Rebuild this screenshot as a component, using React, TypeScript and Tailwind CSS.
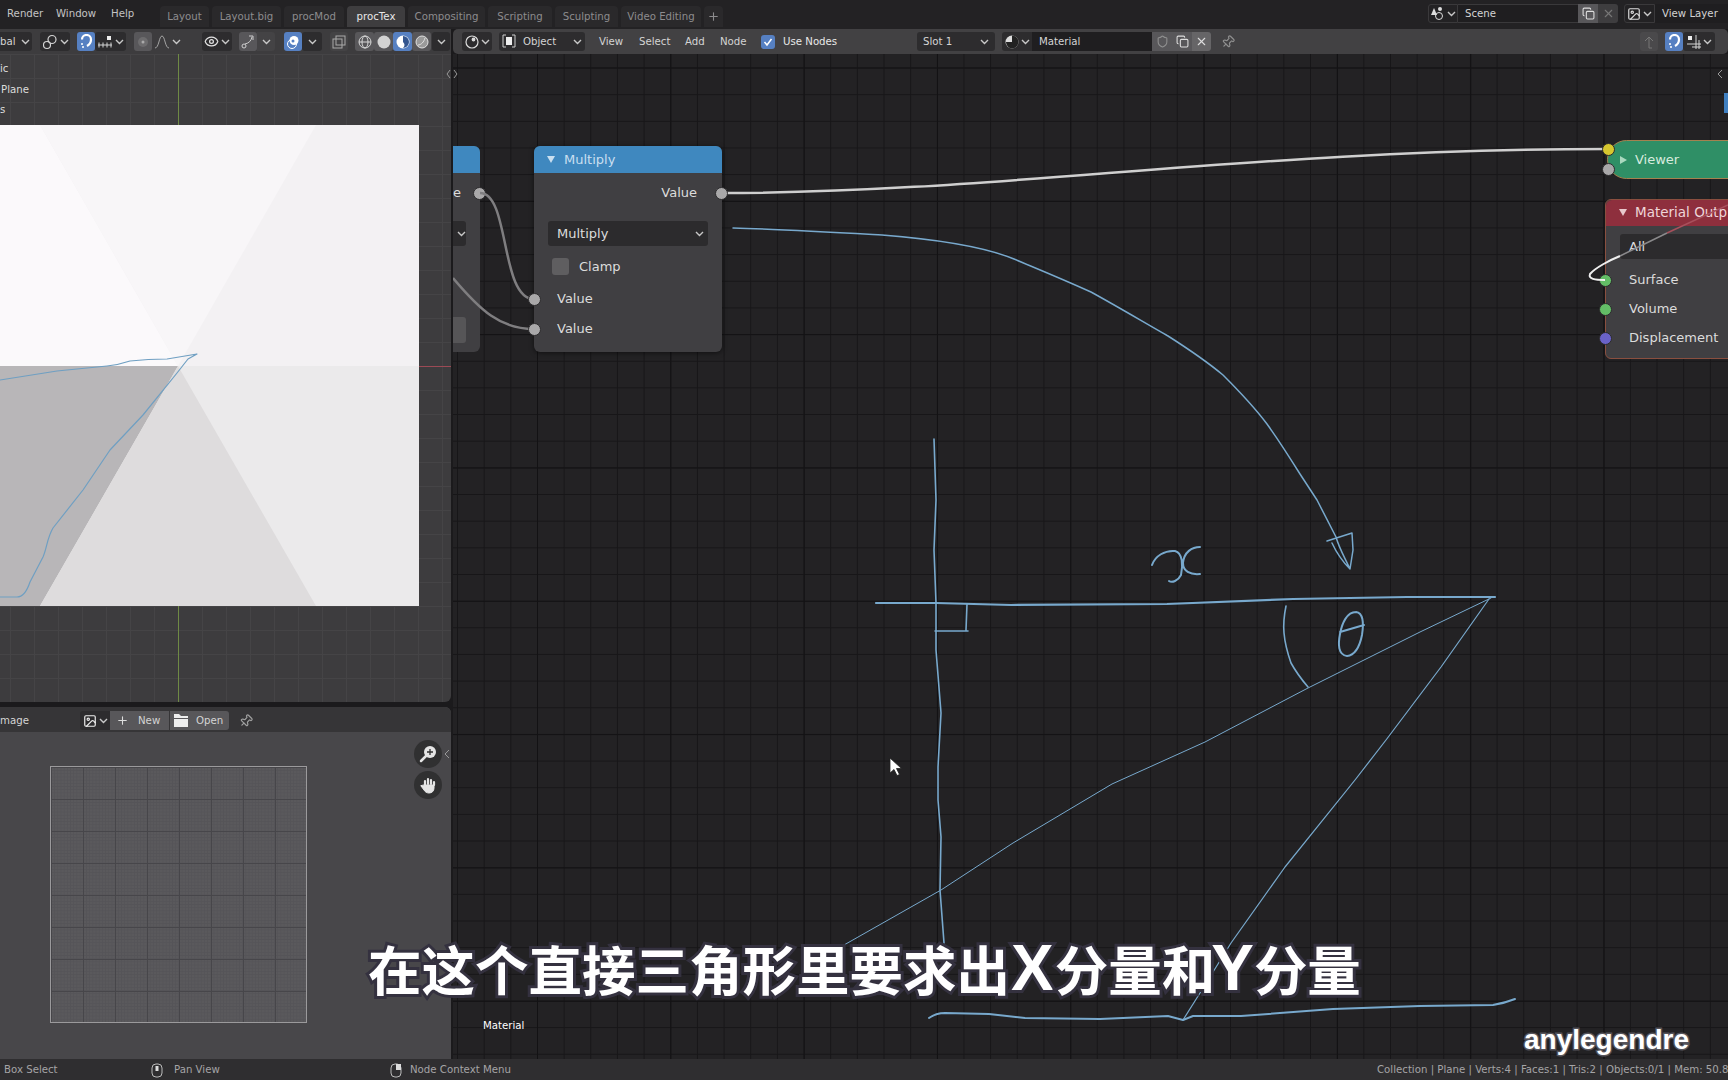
import type { ReactNode } from 'react';
import { Copy, Eye, Image as ImageIcon, Pin, Plus, Shield, X } from 'lucide-react';

const tabs = [
	{ name: 'Layout', w: 'w-[49px]' },
	{ name: 'Layout.big', w: 'w-[69px]' },
	{ name: 'procMod', w: 'w-[60px]' },
	{ name: 'procTex', w: 'w-[58px]', active: true },
	{ name: 'Compositing', w: 'w-[77px]' },
	{ name: 'Scripting', w: 'w-[64px]' },
	{ name: 'Sculpting', w: 'w-[63px]' },
	{ name: 'Video Editing', w: 'w-[80px]' },
];

const Chevron = ({ className = '' }: { className?: string }) => (
	<svg width="9" height="6" viewBox="0 0 9 6" className={className}>
		<path d="M1 1l3.5 3.5L8 1" fill="none" stroke="#c8c8c8" strokeWidth="1.4" />
	</svg>
);

const Magnet = () => (
	<svg width="15" height="15" viewBox="0 0 15 15" fill="none" stroke="#fff" strokeWidth="2.2">
		<path d="M3 5.5a4.5 4.5 0 0 1 9 0c0 3-1.500 5-4 6.500" />
		<path d="M2 10h2.500M3 13h2" strokeWidth="1.300" strokeDasharray="2 1" />
	</svg>
);

const LinkIcon = () => (
	<svg width="16" height="16" viewBox="0 0 16 16" fill="none" stroke="#d4d4d4" strokeWidth="1.200">
		<circle cx="10" cy="5.500" r="4" />
		<circle cx="5" cy="11" r="3.500" />
	</svg>
);

const SnapIcon = () => (
	<svg width="16" height="14" viewBox="0 0 16 14" fill="none" stroke="#d4d4d4" strokeWidth="1">
		<rect x="10" y="1" width="4" height="4" fill="#eee" stroke="none" />
		<path d="M1 10h14M2 7.500v5M6 7.500v5M10 7.500v5M14 7.500v5" />
	</svg>
);

const DarkBtn = ({ w, children }: { w: string; children: ReactNode }) => (
	<div className={`${w} h-[19px] flex items-center justify-center gap-[2px] bg-[#2d2c2e] rounded-[3px]`}>{children}</div>
);

const GreyBtn = ({ w, children }: { w: string; children: ReactNode }) => (
	<div className={`${w} h-[19px] flex items-center justify-center bg-[#58575a] rounded-[3px]`}>{children}</div>
);

const BlueBtn = ({ w, children }: { w: string; children: ReactNode }) => (
	<div className={`${w} h-[19px] flex items-center justify-center bg-[#5680c2] rounded-[3px]`}>{children}</div>
);

const Socket = ({ className }: { className: string }) => (
	<span className={`absolute w-[13px] h-[13px] rounded-full border border-[#2c2b2d] ${className}`} />
);

const ViewportHeader = () => (
	<div className="h-[25px] shrink-0 flex items-center bg-[#3d3c3e] text-[10.2px] text-[#d4d4d4]">
		<div className="w-[32px] h-[19px] flex items-center justify-between pr-[2px] bg-[#2d2c2e] rounded-r-[3px]">
			<span>bal</span>
			<Chevron />
		</div>
		<div className="ml-[8px]">
			<DarkBtn w="w-[30px]"><LinkIcon /><Chevron /></DarkBtn>
		</div>
		<div className="ml-[7px] flex">
			<BlueBtn w="w-[18px]"><Magnet /></BlueBtn>
			<DarkBtn w="w-[31px]"><SnapIcon /><Chevron /></DarkBtn>
		</div>
		<div className="ml-[8px] flex">
			<GreyBtn w="w-[18px]">
				<svg width="12" height="12" viewBox="0 0 12 12"><circle cx="6" cy="6" r="5" fill="#6d6c6e" /><circle cx="6" cy="6" r="1.500" fill="#aaa" /></svg>
			</GreyBtn>
			<div className="w-[31px] h-[19px] flex items-center justify-center gap-[2px]">
				<svg width="16" height="14" viewBox="0 0 16 14" fill="none" stroke="#a5a5a5" strokeWidth="1"><path d="M1 13c4 0 4-12 7-12s3 12 7 12" /></svg>
				<Chevron />
			</div>
		</div>
		<div className="ml-[19px]">
			<DarkBtn w="w-[30px]"><Eye size={15} color="#e2e2e2" /><Chevron /></DarkBtn>
		</div>
		<div className="ml-[7px] flex">
			<GreyBtn w="w-[18px]">
				<svg width="14" height="14" viewBox="0 0 14 14" fill="none" stroke="#cfcfcf" strokeWidth="1"><circle cx="3" cy="11" r="2" /><path d="M4 9c4-1 6-3 7-7M8 1h4v4" /></svg>
			</GreyBtn>
			<div className="w-[18px] h-[19px] flex items-center justify-center bg-[#444345] rounded-r-[3px]"><Chevron /></div>
		</div>
		<div className="ml-[9px] flex">
			<BlueBtn w="w-[18px]">
				<svg width="14" height="14" viewBox="0 0 14 14"><circle cx="6" cy="9" r="4.500" fill="none" stroke="#fff" /><circle cx="8" cy="5.500" r="4.500" fill="#fff" /><circle cx="7" cy="6" r="1.500" fill="#5680c2" /></svg>
			</BlueBtn>
			<DarkBtn w="w-[20px]"><Chevron /></DarkBtn>
		</div>
		<div className="ml-[8px]">
			<div className="w-[18px] h-[19px] flex items-center justify-center bg-[#444345] rounded-[3px]">
				<svg width="14" height="14" viewBox="0 0 14 14" fill="none" stroke="#aaa"><rect x="4" y="1" width="9" height="9" /><rect x="1" y="4" width="9" height="9" /></svg>
			</div>
		</div>
		<div className="ml-[7px] flex">
			<GreyBtn w="w-[19px]">
				<svg width="14" height="14" viewBox="0 0 14 14" fill="none" stroke="#d8d8d8"><circle cx="7" cy="7" r="6" /><ellipse cx="7" cy="7" rx="3" ry="6" /><path d="M1 7h12" /></svg>
			</GreyBtn>
			<GreyBtn w="w-[19px]">
				<svg width="14" height="14" viewBox="0 0 14 14"><circle cx="7" cy="7" r="6.500" fill="#d2d2d2" /></svg>
			</GreyBtn>
			<BlueBtn w="w-[19px]">
				<svg width="14" height="14" viewBox="0 0 14 14"><circle cx="7" cy="7" r="6.500" fill="#fff" /><path d="M7 1a6 6 0 0 1 6 6 6 6 0 0 1-6 6c2-2 2-4 0-6z" fill="#34568f" /></svg>
			</BlueBtn>
			<GreyBtn w="w-[19px]">
				<svg width="14" height="14" viewBox="0 0 14 14" fill="#9a9a9a" stroke="#e0e0e0"><circle cx="7" cy="7" r="6" /><path d="M3 10c3 0 6-3 7-7" fill="none" /></svg>
			</GreyBtn>
		</div>
		<div className="ml-[1px] w-[18px] h-[19px] flex items-center justify-center bg-[#2d2c2e] rounded-[3px]"><Chevron /></div>
	</div>
);

const NodeHeader = () => (
	<div className="relative h-[25px] shrink-0 flex items-center pl-[9px] bg-[#424143] rounded-[5px] text-[10.2px] text-[#d4d4d4]">
		<DarkBtn w="w-[30px]">
			<svg width="14" height="14" viewBox="0 0 14 14" fill="none" stroke="#ddd" strokeWidth="1.200"><circle cx="7" cy="7" r="6" /><circle cx="8.500" cy="4.500" r="1.300" fill="#ddd" /></svg>
			<Chevron />
		</DarkBtn>
		<div className="ml-[7px] w-[86px] h-[19px] flex items-center justify-between px-[3px] bg-[#2d2c2e] rounded-[3px]">
			<span className="flex items-center gap-[7px]">
				<svg width="14" height="14" viewBox="0 0 14 14" fill="none" stroke="#ccc"><path d="M4 1H1v12h3M10 1h3v12h-3" /><rect x="4" y="3" width="6" height="8" fill="#eee" stroke="none" /></svg>
				Object
			</span>
			<Chevron />
		</div>
		<span className="ml-[14px] w-[26px]">View</span>
		<span className="ml-[14px] w-[32px]">Select</span>
		<span className="ml-[14px] w-[20px]">Add</span>
		<span className="ml-[15px] w-[27px]">Node</span>
		<div className="ml-[14px] w-[14px] h-[14px] flex items-center justify-center bg-[#5680c2] rounded-[3px]">
			<svg width="10" height="10" viewBox="0 0 10 10" fill="none" stroke="#fff" strokeWidth="1.500"><path d="M1.500 5l2.500 3 4.500-6" /></svg>
		</div>
		<span className="ml-[8px] w-[56px] text-[#e8e8e8] whitespace-nowrap">Use Nodes</span>
		<div className="ml-[78px] w-[78px] h-[19px] flex items-center justify-between px-[6px] bg-[#2d2c2e] rounded-[3px]">
			<span>Slot 1</span>
			<Chevron />
		</div>
		<div className="ml-[7px] flex h-[19px]">
			<div className="w-[30px] flex items-center justify-center gap-[2px] bg-[#2d2c2e] rounded-l-[3px]">
				<svg width="14" height="14" viewBox="0 0 14 14"><circle cx="7" cy="7" r="6.500" fill="#ddd" /><path d="M7 .5a6.500 6.500 0 0 1 0 13z M1 7h6v6.500a6.500 6.500 0 0 1-6-6.500z" fill="#222" /></svg>
				<Chevron />
			</div>
			<div className="w-[120px] flex items-center px-[7px] bg-[#1f1e20]">Material</div>
			<div className="w-[20px] flex items-center justify-center bg-[#58575a]"><Shield size={13} color="#8f8f8f" /></div>
			<div className="w-[20px] flex items-center justify-center bg-[#58575a]"><Copy size={13} color="#ddd" /></div>
			<div className="w-[19px] flex items-center justify-center bg-[#666567] rounded-r-[3px]"><X size={13} color="#ddd" /></div>
		</div>
		<Pin size={14} color="#8f8f8f" className="ml-[10px] rotate-45" />
		<div className="ml-auto mr-[13px] flex items-center">
			<div className="w-[18px] h-[19px] flex items-center justify-center bg-[#4a494b] rounded-[3px]">
				<svg width="12" height="14" viewBox="0 0 12 14" fill="none" stroke="#777"><path d="M6 13V2M2 6l4-4 4 4M9 13H6" /></svg>
			</div>
			<div className="ml-[7px]"><BlueBtn w="w-[18px]"><Magnet /></BlueBtn></div>
			<DarkBtn w="w-[32px]">
				<svg width="14" height="14" viewBox="0 0 14 14" fill="none" stroke="#d4d4d4"><rect x="1" y="1" width="4" height="4" fill="#eee" stroke="none" /><path d="M0 9h14M9 0v14M5 12h9M12 5v9" /></svg>
				<Chevron />
			</DarkBtn>
		</div>
	</div>
);

const MultiplyNode = () => (
	<div className="absolute left-[81px] top-[92px] w-[188px] h-[206px] flex flex-col bg-[#403f42] rounded-[6px] shadow-[0_1px_5px_#0008] text-[13px] text-[#dcdcdc]">
		<div className="h-[27px] flex items-center pl-[13px] gap-[9px] bg-[#3f88bf] rounded-t-[6px] text-[#c9dff0]">
			<svg width="8" height="7" viewBox="0 0 8 7"><path d="M0 0h8L4 7z" fill="#c9dff0" /></svg>
			Multiply
		</div>
		<div className="h-[40px] flex items-center justify-end pr-[25px]">Value</div>
		<div className="mx-[14px] mt-[8px] h-[25px] flex items-center justify-between pl-[9px] pr-[4px] bg-[#2c2b2d] rounded-[3px]">
			Multiply
			<Chevron />
		</div>
		<div className="mt-[12px] ml-[18px] h-[17px] flex items-center gap-[10px]">
			<span className="w-[17px] h-[17px] bg-[#5f5e60] rounded-[3px]" />
			Clamp
		</div>
		<div className="mt-[9px] ml-[23px] h-[30px] flex items-center">Value</div>
		<div className="ml-[23px] h-[30px] flex items-center">Value</div>
		<Socket className="left-[-6px] top-[147px] bg-[#a9a8a9]" />
		<Socket className="left-[-6px] top-[177px] bg-[#a9a8a9]" />
		<Socket className="right-[-6px] top-[41px] bg-[#a9a8a9]" />
	</div>
);

const LeftNode = () => (
	<div className="absolute left-0 top-[92px] w-[27px] h-[206px] flex flex-col bg-[#403f42] rounded-r-[6px] text-[13px] text-[#dcdcdc]">
		<div className="h-[27px] bg-[#3f88bf] rounded-tr-[6px]" />
		<div className="h-[40px] flex items-center">e</div>
		<div className="mt-[8px] w-[13px] h-[25px] flex items-center justify-end bg-[#2c2b2d] rounded-r-[3px]"><Chevron /></div>
		<div className="mt-[71px] w-[13px] h-[26px] bg-[#565557] rounded-r-[3px]" />
		<Socket className="right-[-6px] top-[41px] bg-[#a9a8a9]" />
	</div>
);

const ViewerNode = () => (
	<div className="absolute left-[1154px] top-[86px] w-[140px] h-[39px] flex items-center pl-[12px] gap-[8px] bg-[#2f8f66] border border-[#a5814f] rounded-l-[20px] text-[13px] text-[#d7ebdf]">
		<svg width="7" height="8" viewBox="0 0 7 8"><path d="M0 0l7 4-7 4z" fill="#a9d9bf" /></svg>
		Viewer
		<Socket className="left-[-6px] top-[2px] bg-[#d6c72f]" />
		<Socket className="left-[-6px] top-[22px] bg-[#a9a8a9]" />
	</div>
);

const MaterialNode = () => (
	<div className="absolute left-[1152px] top-[145px] w-[200px] h-[160px] flex flex-col bg-[#403f42] border border-[#8a4f3f] rounded-[6px] text-[13px] text-[#dcdcdc]">
		<div className="h-[26px] pb-[2px] flex items-center pl-[13px] gap-[8px] bg-[#8e2f3d] rounded-t-[6px] text-[13.5px] text-[#eed5d8]">
			<svg width="8" height="7" viewBox="0 0 8 7"><path d="M0 0h8L4 7z" fill="#e8c8cc" /></svg>
			Material Outp
		</div>
		<div className="ml-[14px] mt-[8px] h-[25px] flex items-center pl-[9px] bg-[#2c2b2d] rounded-l-[3px]">All</div>
		<div className="ml-[23px] mt-[7px] h-[28px] flex items-center">Surface</div>
		<div className="ml-[23px] h-[30px] flex items-center">Volume</div>
		<div className="ml-[23px] h-[28px] flex items-center">Displacement</div>
		<Socket className="left-[-7px] top-[74px] bg-[#63bd66]" />
		<Socket className="left-[-7px] top-[103px] bg-[#63bd66]" />
		<Socket className="left-[-7px] top-[132px] bg-[#6a62c8]" />
	</div>
);

const Strokes = () => (
	<svg width="1728" height="1080" viewBox="0 0 1728 1080" className="absolute left-0 top-0 pointer-events-none" fill="none" stroke="#78a9cd" strokeLinecap="round" strokeLinejoin="round">
		<path strokeWidth="1.200" stroke="#6f9fc2" d="M0 380L57 371L107 366Q118 365 130 361Q148 359 167 359L197 354L188 359L177 373L143 415L110 450L83 490L53 528C47 538 47 548 43 557L30 582Q25 597 17 597H0" />
		<path strokeWidth="1.500" d="M733 228C780 229 830 232 882 235C920 238 980 245 1014 259C1045 272 1060 278 1091 292C1120 308 1140 320 1168 336C1190 350 1205 360 1223 375C1240 392 1255 408 1267 424C1280 442 1290 458 1300 474L1317 500L1336 537C1339 548 1345 558 1350 569C1347 566 1338 556 1332 543M1327 541L1352 533L1353 550L1350 569" />
		<path strokeWidth="2" d="M1152 565C1155 556 1165 550 1175 551C1183 553 1183 566 1181 575C1178 581 1172 583 1169 581M1200 547C1192 547 1184 552 1183 563C1183 571 1190 575 1200 574" />
		<path strokeWidth="2.200" d="M876 603L936 603L1011 605L1167 604L1293 599L1407 597L1495 597" />
		<path strokeWidth="1.600" d="M934 439L936 500L934 550L936 603L936 650L941 713L938 767L938 800L941 837L940 890L944 943" />
		<path strokeWidth="1.600" d="M967 604L966 630M935 631L968 631" />
		<path strokeWidth="1.600" d="M1286 606C1282 625 1283 640 1291 663C1296 672 1302 680 1308 687" />
		<path strokeWidth="2" d="M1356 612C1347 612 1342 623 1340 634C1338 644 1338 655 1347 656C1356 655 1360 645 1362 635C1364 622 1363 613 1356 612M1340 632L1364 625" />
		<path strokeWidth="1" d="M1491 598L1420 632L1308 688L1205 742L1112 784L1013 843L941 890L844 945" />
		<path strokeWidth="1.200" d="M1489 599L1441 667L1386 740L1355 780L1285 867L1231 943L1200 993L1183 1020" />
		<path strokeWidth="2" d="M929 1018Q936 1013 945 1013L989 1014L1025 1018L1100 1019L1168 1016L1183 1020L1193 1016L1241 1016L1333 1009L1420 1006L1493 1005Q1505 1003 1515 999" />
	</svg>
);

const App = () => (
	<div className="relative w-[1728px] h-[1080px] flex flex-col overflow-hidden bg-[#1b1a1c] font-['DejaVu_Sans',sans-serif]">
		<div className="h-[29px] shrink-0 flex items-start bg-[#232224] text-[10.2px] text-[#c4c4c4]">
			<div className="w-[160px] shrink-0 flex h-[27px] items-center">
				<span className="ml-[7px] w-[49px]">Render</span>
				<span className="w-[55px]">Window</span>
				<span>Help</span>
			</div>
			<div className="mt-[6px] flex gap-[3px]">
				{tabs.map((tab) => (
					<div
						key={tab.name}
						className={`${tab.w} h-[21px] flex items-center justify-center rounded-t-[4px] ${tab.active ? 'bg-[#3e3d3f] text-[#e8e8e8]' : 'bg-[#2a292b] text-[#8d8c8e]'}`}
					>
						{tab.name}
					</div>
				))}
				<div className="w-[19px] h-[21px] flex items-center justify-center bg-[#2a292b] rounded-t-[4px]">
					<Plus size={13} color="#8d8c8e" />
				</div>
			</div>
			<div className="ml-auto mt-[4px] flex h-[19px]">
				<div className="w-[30px] flex items-center justify-center gap-[2px] border border-[#3a393b] rounded-l-[3px]">
					<svg width="15" height="15" viewBox="0 0 15 15"><path d="M4 2l3 7H1z" fill="#ddd" /><circle cx="10" cy="3" r="2" fill="#ddd" /><circle cx="9" cy="10" r="3.500" fill="none" stroke="#ddd" /></svg>
					<Chevron />
				</div>
				<div className="w-[120px] flex items-center px-[7px] bg-[#1f1e20] border-y border-[#3a393b] text-[#d4d4d4]">Scene</div>
				<div className="w-[20px] flex items-center justify-center bg-[#58575a]"><Copy size={13} color="#ddd" /></div>
				<div className="w-[20px] flex items-center justify-center bg-[#3e3d3f] rounded-r-[3px]"><X size={13} color="#777" /></div>
				<div className="ml-[6px] w-[31px] flex items-center justify-center gap-[2px] border border-[#3a393b] rounded-l-[3px]">
					<ImageIcon size={14} color="#ddd" />
					<Chevron />
				</div>
				<div className="w-[73px] flex items-center pl-[7px] bg-[#1f1e20] text-[#d4d4d4] whitespace-nowrap">View Layer</div>
			</div>
		</div>

		<div className="flex-1 min-h-0 flex">
			<div className="w-[451px] shrink-0 flex flex-col gap-[5px]">
				<div className="relative h-[673px] shrink-0 flex flex-col overflow-hidden bg-[#3d3c3e] rounded-br-[6px]">
					<ViewportHeader />
					<div className="relative flex-1 bg-[linear-gradient(#454446_1px,transparent_1px),linear-gradient(90deg,#454446_1px,transparent_1px)] bg-[size:24px_24px] bg-[position:10px_0]">
						<div className="absolute left-[178px] top-0 bottom-0 w-[1px] bg-[#6f8a45]" />
						<div className="absolute left-[419px] right-0 top-[312px] h-[1px] bg-[#9c4a55]" />
						<svg width="419" height="481" viewBox="0 125 419 481" className="absolute left-0 top-[71px]">
							<rect x="0" y="125" width="419" height="241" fill="#f3f1f3" />
							<path d="M0 125H40L178 366H0z" fill="#fbf9fb" />
							<path d="M40 125H316L178 366z" fill="#f8f6f8" />
							<rect x="0" y="366" width="419" height="240" fill="#ebeaeb" />
							<path d="M0 366H178L40 606H0z" fill="#b8b6b8" />
							<path d="M178 366L40 606H316z" fill="#dedcdd" />
						</svg>
						<div className="absolute left-0 top-[5px] flex flex-col text-[10.2px] leading-[20.500px] text-[#dcdcdc]">
							<span>ic</span>
							<span className="pl-[1px]">Plane</span>
							<span>s</span>
						</div>
					</div>
				</div>

				<div className="flex-1 min-h-0 flex flex-col overflow-hidden rounded-tr-[6px] bg-[#48474a]">
					<div className="h-[25px] pt-[2px] shrink-0 flex items-center bg-[#363537] text-[10.2px] text-[#d4d4d4]">
						<span className="w-[80px]">mage</span>
						<div className="w-[30px] h-[19px] flex items-center justify-center gap-[2px] bg-[#2d2c2e] rounded-l-[3px]">
							<ImageIcon size={14} color="#eee" />
							<Chevron />
						</div>
						<div className="w-[60px] h-[19px] flex items-center gap-[9px] pl-[6px] bg-[#58575a] border-r border-[#363537]">
							<Plus size={13} color="#ddd" />
							New
						</div>
						<div className="w-[59px] h-[19px] flex items-center gap-[8px] pl-[4px] bg-[#58575a] rounded-r-[3px]">
							<svg width="14" height="13" viewBox="0 0 14 13"><path d="M0 0h5l2 2h7v2H0zM0 5h14v8H0z" fill="#eee" /></svg>
							Open
						</div>
						<Pin size={14} color="#a0a0a0" className="ml-[10px] rotate-45" />
					</div>
					<div className="relative flex-1">
						<div className="ml-[50px] mt-[34px] w-[257px] h-[257px] border border-[#9b9a9c] bg-[#5a595c] bg-[linear-gradient(#47464a_1px,transparent_1px),linear-gradient(90deg,#47464a_1px,transparent_1px),linear-gradient(#555458_1px,transparent_1px),linear-gradient(90deg,#555458_1px,transparent_1px)] bg-[size:32px_32px,32px_32px,3.200px_3.200px,3.200px_3.200px]" />
						<div className="absolute left-[414px] top-[8px] flex flex-col gap-[3px]">
							<div className="w-[28px] h-[28px] flex items-center justify-center rounded-full bg-[#303031]">
								<svg width="18" height="18" viewBox="0 0 18 18">
									<path d="M7 11l-5 5" stroke="#e5e5e5" strokeWidth="2.500" strokeLinecap="round" />
									<circle cx="11" cy="7" r="6" fill="#e5e5e5" />
									<path d="M8 7h6M11 4v6" stroke="#303031" strokeWidth="1.300" />
								</svg>
							</div>
							<div className="w-[28px] h-[28px] flex items-center justify-center rounded-full bg-[#303031]">
								<svg width="18" height="18" viewBox="0 0 18 18" fill="none" stroke="#e5e5e5" strokeWidth="2.200" strokeLinecap="round">
									<path d="M6 9V5M9 8V3M12 8V4M15 9V6" />
									<path d="M2 10l3 4c1 2 3 3 5 3 3 0 5-2 5-5V9H5z" fill="#e5e5e5" strokeWidth="1" />
								</svg>
							</div>
						</div>
						<svg width="6" height="10" viewBox="0 0 6 10" className="absolute left-[444px] top-[17px]"><path d="M5 1L1 5l4 4" fill="none" stroke="#999" /></svg>
					</div>
				</div>
			</div>

			<div className="ml-[2px] flex-1 min-w-0 flex flex-col">
				<NodeHeader />
				<div className="relative flex-1 overflow-hidden bg-[#232224] bg-[linear-gradient(#131214_1px,transparent_1px),linear-gradient(90deg,#131214_1px,transparent_1px),linear-gradient(#171618_1px,transparent_1px),linear-gradient(90deg,#171618_1px,transparent_1px)] bg-[size:133.330px_133.330px,133.330px_133.330px,26.667px_26.667px,26.667px_26.667px] bg-[position:84px_13.500px,84px_13.500px,4px_13.500px,4px_13.500px]">
					<svg width="1275" height="1006" viewBox="453 54 1275 1006" className="absolute left-0 top-0" fill="none">
						<path d="M721 193C1000 193 1250 149 1607 149" stroke="#cfcfcf" strokeWidth="2.500" />
					</svg>
					<LeftNode />
					<svg width="1275" height="1006" viewBox="453 54 1275 1006" className="absolute left-0 top-0" fill="none">
						<path d="M480 193C510 193 500 299 534 299" stroke="#7f7e80" strokeWidth="2.500" />
						<path d="M453 278C480 310 500 329 534 329" stroke="#7f7e80" strokeWidth="2.500" />
					</svg>
					<MultiplyNode />
					<ViewerNode />
					<MaterialNode />
					<svg width="1275" height="1006" viewBox="453 54 1275 1006" className="absolute left-0 top-0" fill="none">
						<path d="M1605 280C1595 280 1588 279 1590 274C1595 268 1610 260 1620 256" stroke="#efefef" strokeWidth="2" />
						<path d="M1620 256L1667 233" stroke="#8a898b" strokeWidth="1.500" />
						<path d="M1667 233L1728 205" stroke="#a8505c" strokeWidth="1.500" />
					</svg>
					<span className="absolute left-[30px] top-[964px] text-[10.2px] text-white">Material</span>
					<div className="absolute right-0 top-[39px] w-[4px] h-[20px] bg-[#3f7fc0]" />
					<svg width="6" height="10" viewBox="0 0 6 10" className="absolute right-[5px] top-[15px]"><path d="M5 1L1 5l4 4" fill="none" stroke="#999" /></svg>
					<svg width="14" height="20" viewBox="0 0 14 20" className="absolute left-[436px] top-[703px]"><path d="M1 1v15l4-3.500 3 6 2.500-1-3-6h5z" fill="#fff" stroke="#222" strokeWidth=".8" /></svg>
				</div>
			</div>
		</div>

		<div className="relative h-[21px] pt-[1px] shrink-0 flex items-center bg-[#2f2e30] text-[10.2px] text-[#a5a4a6] whitespace-nowrap">
			<span className="ml-[4px] w-[53px]">Box Select</span>
			<svg width="12" height="15" viewBox="0 0 12 15" className="ml-[94px]" fill="none" stroke="#bbb"><rect x="1" y="1" width="10" height="13" rx="4" /><rect x="4.500" y="3" width="3" height="5" fill="#ddd" stroke="none" /></svg>
			<span className="ml-[11px] w-[46px]">Pan View</span>
			<svg width="12" height="15" viewBox="0 0 12 15" className="ml-[170px]" fill="none" stroke="#bbb"><rect x="1" y="1" width="10" height="13" rx="4" /><rect x="6" y="1" width="5" height="6" fill="#ddd" stroke="none" /></svg>
			<span className="ml-[8px]">Node Context Menu</span>
			<span className="absolute left-[1377px]">Collection | Plane | Verts:4 | Faces:1 | Tris:2 | Objects:0/1 | Mem: 50.8</span>
		</div>

		<svg width="12" height="10" viewBox="0 0 12 10" className="absolute left-[446px] top-[69px]"><path d="M4 1L1 5l3 4M8 1l3 4-3 4" fill="none" stroke="#999" /></svg>

		<Strokes />

		<div className="absolute left-[368px] top-[928px] h-[80px] flex items-center whitespace-nowrap font-['Noto_Sans_CJK_SC',sans-serif] font-bold text-[53.500px] text-white [-webkit-text-stroke:6px_#34313f] [paint-order:stroke_fill]">
			在这个直接三角形里要求出
			<span className="mx-[1px] font-['Liberation_Sans',sans-serif] text-[64px]">X</span>
			分量和
			<span className="ml-[-4px] font-['Liberation_Sans',sans-serif] text-[64px]">Y</span>
			分量
		</div>
		<div className="absolute left-[1524px] top-[1024px] font-['Liberation_Sans',sans-serif] font-bold text-[28px] leading-[32px] text-white [-webkit-text-stroke:3px_#55535a] [paint-order:stroke_fill]">
			anylegendre
		</div>
	</div>
);

export default App;
